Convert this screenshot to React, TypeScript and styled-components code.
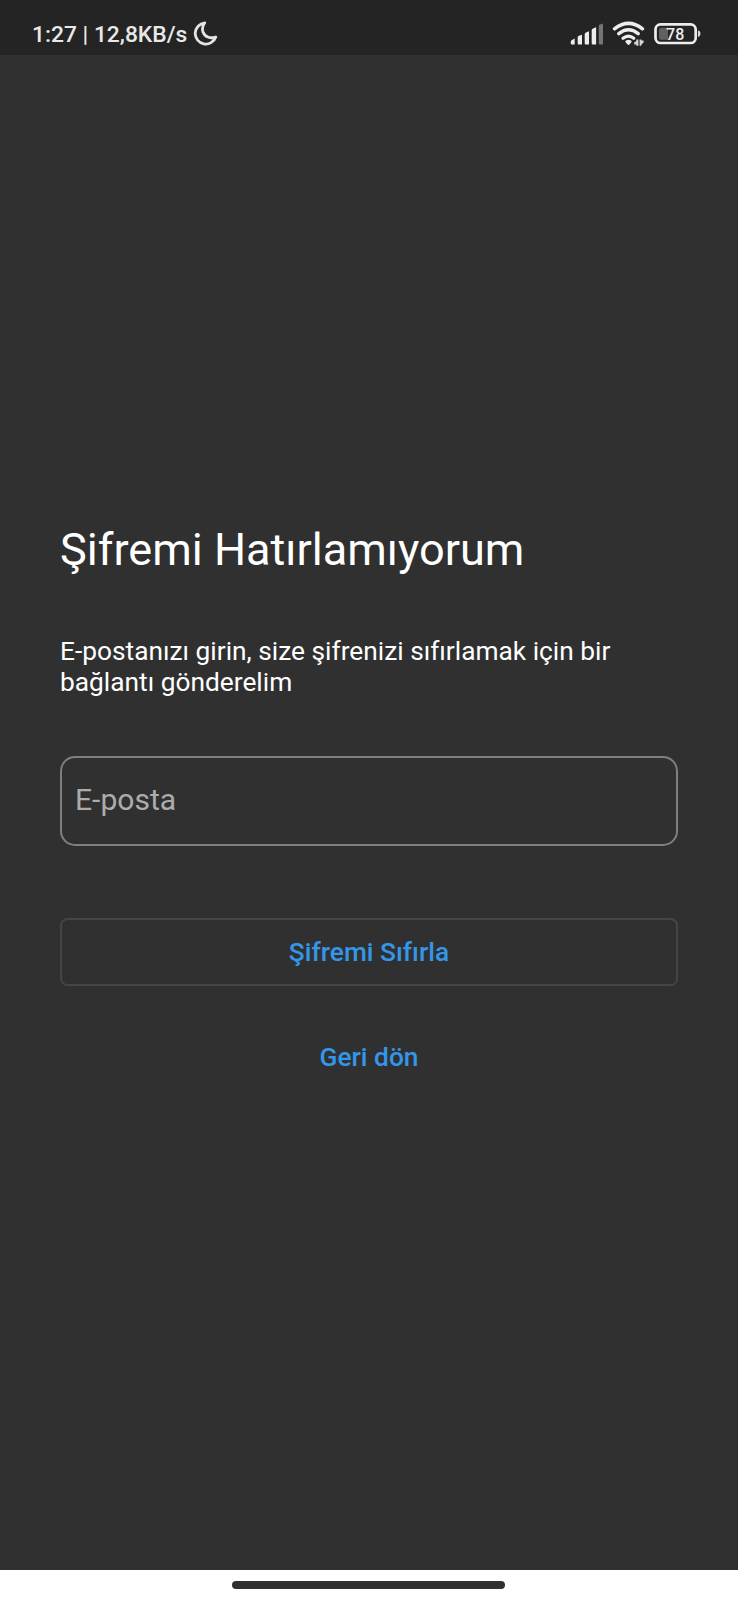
import React from "react";
import styled, { createGlobalStyle } from "styled-components";

const GlobalStyle = createGlobalStyle`
  * { box-sizing: border-box; }
  body {
    margin: 0;
    background: #303030;
    font-family: Roboto, "Liberation Sans", sans-serif;
  }
`;

const Screen = styled.div`
  display: flex;
  flex-direction: column;
  width: 738px;
  height: 1600px;
  background: #303030;
  color: #fff;
`;

const StatusBar = styled.header`
  display: flex;
  flex: none;
  justify-content: space-between;
  height: 55px;
  padding: 0 36px 0 32px;
  background: #242424;
  color: #e8e8e8;
`;

const StatusGroup = styled.div`
  display: flex;
  align-items: flex-start;
`;

const StatusText = styled.span`
  width: 155px;
  margin-top: 20px;
  font-size: 22.8px;
  font-weight: 500;
  line-height: 29px;
  white-space: nowrap;
`;

const StatusIcon = styled.svg<{ $top: number; $left: number }>`
  display: block;
  flex: none;
  margin: ${(p) => p.$top}px 0 0 ${(p) => p.$left}px;
`;

const Content = styled.main`
  display: flex;
  flex: 1;
  flex-direction: column;
  padding: 468px 60px 0;
`;

const Title = styled.h1`
  margin: 0;
  font-size: 45.1px;
  font-weight: 400;
  line-height: 53px;
  white-space: nowrap;
`;

const Description = styled.p`
  margin: 60px 0 0;
  font-size: 26.3px;
  line-height: 30.8px;
`;

const EmailInput = styled.input`
  width: 100%;
  height: 90px;
  margin: 58.4px 0 0;
  padding: 0 13px 2px;
  border: 2px solid #7f7f7f;
  border-radius: 15px;
  outline: none;
  background: transparent;
  color: #fff;
  font: 400 30.1px Roboto, "Liberation Sans", sans-serif;

  &::placeholder {
    color: #acacac;
    opacity: 1;
  }
`;

const Button = styled.button<{ $outlined?: boolean }>`
  display: flex;
  align-items: center;
  justify-content: center;
  height: 68px;
  padding: 0;
  border: 2px solid ${(p) => (p.$outlined ? "#454545" : "transparent")};
  border-radius: 7.5px;
  background: transparent;
  color: #3496e8;
  font: 500 26.3px Roboto, "Liberation Sans", sans-serif;
`;

const Actions = styled.div`
  display: flex;
  flex-direction: column;
  gap: 37px;
  margin-top: 72px;
`;

const NavigationBar = styled.footer`
  display: flex;
  flex: none;
  justify-content: center;
  height: 30px;
  padding: 11px 1.5px 0 0;
  background: #fff;
`;

const HomeHandle = styled.div`
  width: 273px;
  height: 7.6px;
  border-radius: 4px;
  background: #303030;
`;

const MoonIcon = () => (
  <StatusIcon $top={21} $left={6} width="25" height="25" viewBox="0 0 25 25">
    <path
      d="M11.7 1.9A10.6 10.6 0 1 0 22.8 16C17 18 11.6 15.8 9.9 10.7C9 7.6 9.7 4.3 11.7 1.9Z"
      fill="none"
      stroke="#e4e4e4"
      strokeWidth="2.8"
      strokeLinejoin="round"
    />
  </StatusIcon>
);

const SignalIcon = () => (
  <StatusIcon $top={23} $left={0} width="34" height="22" viewBox="0 0 34 22">
    <g fill="#ededed">
      <path d="M.8 18.8Q.8 17.5 2 17L4.7 15.6V21.5H1.8Q.8 21.5.8 20.5Z" />
      <path d="M7.7 14.5Q7.7 13.2 8.9 12.8L12 11.8V21.5H8.7Q7.7 21.5 7.7 20.5Z" />
      <path d="M14.7 11Q14.7 10 16 9.5L19 8.2V21.5H15.7Q14.7 21.5 14.7 20.5Z" />
      <path d="M21.7 7Q21.7 6 23 5.4L26.1 4.2V21.5H22.7Q21.7 21.5 21.7 20.5Z" />
    </g>
    <path d="M28.8 3Q28.8 1.8 30 1.4L33 .6V21.5H29.8Q28.8 21.5 28.8 20.5Z" fill="#747474" />
  </StatusIcon>
);

const WifiIcon = () => (
  <StatusIcon $top={21} $left={7.5} width="33" height="26" viewBox="0 0 33 26">
    <g fill="none" stroke="#ededed" strokeWidth="3.5" strokeLinecap="round">
      <path d="M2.5 7.8Q16.5 -3 30.5 7.8" />
      <path d="M6.8 12.6Q16.5 5 26.2 12.6" />
      <path d="M11 17.3Q16.5 13 21.8 17.3" strokeWidth="3.2" />
    </g>
    <path d="M16.5 18.7Q19.2 18.7 19.7 20.3C19.7 21 17.5 24 16.5 24S13.3 21 13.3 20.3Q13.8 18.7 16.5 18.7Z" fill="#ededed" />
    <g fill="#d8d8d8">
      <path d="M24.4 18.4H26.4V24.8H24.4V23.4H22.2V21.6L24.4 20Z" />
      <path d="M27.6 18.4H29.4V19.6H31.6V21.6L29.4 23.4V24.8H27.6Z" />
    </g>
  </StatusIcon>
);

const BatteryIcon = () => (
  <StatusIcon $top={23} $left={9.5} width="48" height="22" viewBox="0 0 48 22">
    <rect x="1.5" y="1.4" width="40.2" height="18.6" rx="5" fill="none" stroke="#ededed" strokeWidth="2.7" />
    <path d="M7 4.7H14V16.7H7Q5 16.7 5 14.7V6.7Q5 4.7 7 4.7Z" fill="#606060" />
    <text x="21.2" y="16.8" textAnchor="middle" fill="#ededed" fontFamily="Roboto, sans-serif" fontSize="16" fontWeight="500">
      78
    </text>
    <path d="M44 7.5Q46.5 7.8 46.5 10.8Q46.5 13.6 44 14Z" fill="#d8d8d8" />
  </StatusIcon>
);

export default function App() {
  return (
    <>
      <GlobalStyle />
      <Screen>
        <StatusBar>
          <StatusGroup>
            <StatusText>1:27 | 12,8KB/s</StatusText>
            <MoonIcon />
          </StatusGroup>
          <StatusGroup>
            <SignalIcon />
            <WifiIcon />
            <BatteryIcon />
          </StatusGroup>
        </StatusBar>
        <Content>
          <Title>Şifremi Hatırlamıyorum</Title>
          <Description>
            E-postanızı girin, size şifrenizi sıfırlamak için bir bağlantı gönderelim
          </Description>
          <EmailInput type="email" placeholder="E-posta" aria-label="E-posta" />
          <Actions>
            <Button type="button" $outlined>
              Şifremi Sıfırla
            </Button>
            <Button type="button">Geri dön</Button>
          </Actions>
        </Content>
        <NavigationBar>
          <HomeHandle />
        </NavigationBar>
      </Screen>
    </>
  );
}
